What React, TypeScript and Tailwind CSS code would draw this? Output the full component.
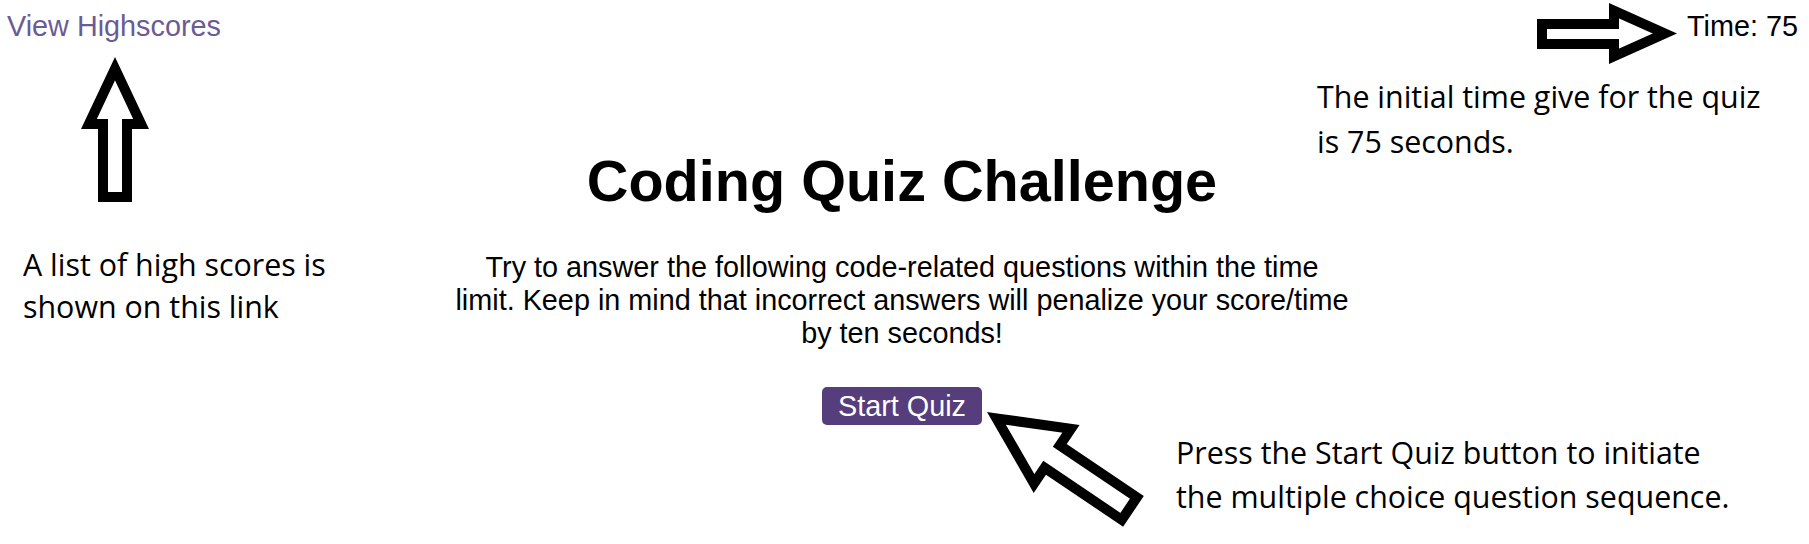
import React from "react";

export default function App() {
  return (
    <div className="relative w-[1809px] h-[544px] overflow-hidden bg-white text-black font-['Liberation_Sans',Arial,sans-serif] text-[28.8px] leading-[normal]">
      <header className="flex items-start justify-between pl-[7px] pr-[11px] pt-[9.5px]">
        <a href="#" className="text-[#6b5b95] no-underline">
          View Highscores
        </a>
        <div>Time: 75</div>
      </header>

      <main className="flex flex-col items-center pr-[5px]">
        <h1 className="mt-[105px] text-[57.6px] font-bold leading-[normal]">
          Coding Quiz Challenge
        </h1>
        <p className="mt-[37.5px] w-[896px] text-center">
          Try to answer the following code-related questions within the time
          limit. Keep in mind that incorrect answers will penalize your
          score/time by ten seconds!
        </p>
        <button className="mt-[37px] rounded-[5px] bg-[#563d7c] px-[15.5px] py-[2.5px] text-white leading-[normal]">
          Start Quiz
        </button>
      </main>

      {/* annotation arrows */}
      <svg
        className="pointer-events-none absolute left-0 top-0"
        width="1809"
        height="544"
        viewBox="0 0 1809 544"
      >
        <g fill="#ffffff" stroke="#000000" strokeWidth="10" strokeLinejoin="miter" strokeMiterlimit="10">
          <polygon points="115,68.7 141.1,124 127,124 127,197 103,197 103,124 88.9,124" />
          <polygon points="1542,24 1614,24 1614,10.7 1664.8,33.5 1614,56.3 1614,44 1542,44" />
          <polygon
            transform="translate(987 412) rotate(34)"
            points="11.4,0 79,-33 79,-13 172,-13 172,14 79,14 79,33"
          />
        </g>
      </svg>

      {/* annotation notes */}
      <div className="absolute left-[23px] top-[244px] font-['Open_Sans','Noto_Sans',sans-serif] text-[30.4px] leading-[42px]">
        <div>A list of high scores is</div>
        <div>shown on this link</div>
      </div>
      <div className="absolute left-[1317px] top-[74px] font-['Open_Sans','Noto_Sans',sans-serif] text-[30.4px] leading-[45px]">
        <div>The initial time give for the quiz</div>
        <div>is 75 seconds.</div>
      </div>
      <div className="absolute left-[1176px] top-[431px] font-['Open_Sans','Noto_Sans',sans-serif] text-[30.4px] leading-[44px]">
        <div>Press the Start Quiz button to initiate</div>
        <div>the multiple choice question sequence.</div>
      </div>
    </div>
  );
}
